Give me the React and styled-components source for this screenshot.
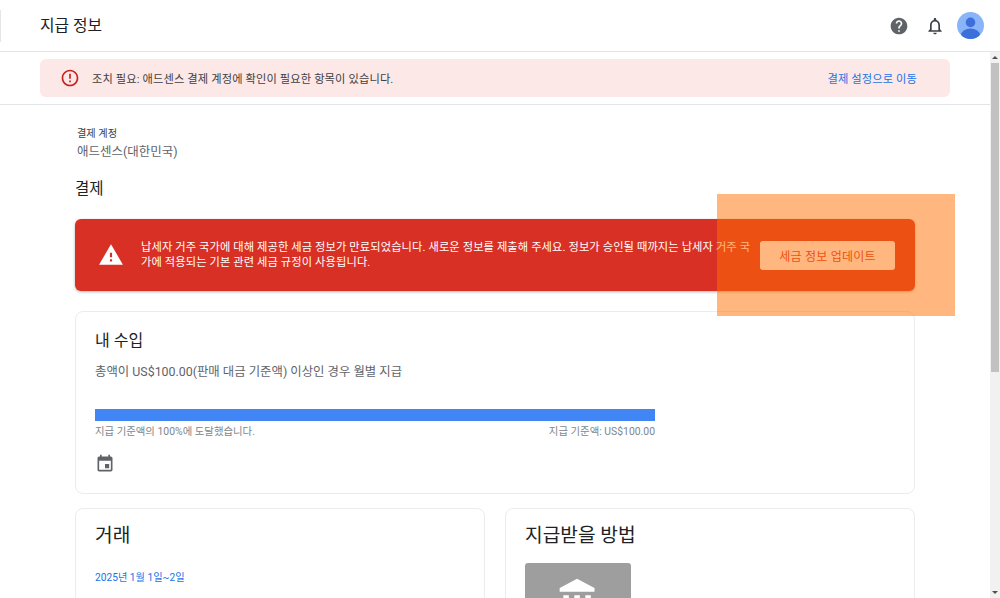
import styled, { createGlobalStyle } from "styled-components";

const GlobalStyle = createGlobalStyle`
  html, body {
    margin: 0;
    padding: 0;
    height: 100%;
    overflow: hidden;
    background: #fff;
    font-family: Roboto, "Noto Sans CJK KR", sans-serif;
  }
  * { box-sizing: border-box; }
`;

const Page = styled.div`
  position: relative;
  width: 1000px;
  height: 598px;
  overflow: hidden;
  display: flex;
  flex-direction: column;
`;

const Header = styled.header`
  flex: none;
  height: 52px;
  display: flex;
  align-items: center;
  padding: 0 16px 0 40px;
  border-bottom: 1px solid #e3e4e7;
`;

const EdgeLine = styled.span`
  position: absolute;
  left: 0;
  top: 10px;
  width: 1px;
  height: 32px;
  background: #e6e6e6;
`;

const PageTitle = styled.h1`
  margin: 0;
  font-size: 15.8px;
  font-weight: 400;
  line-height: 1;
  color: #202124;
  flex: 1;
`;

const HeaderIcons = styled.div`
  display: flex;
  align-items: center;
  gap: 12px;
`;

const HelpSlot = styled.span`
  display: flex;
  margin-right: 4px;
`;

const Body = styled.div`
  flex: 1;
  min-height: 0;
  display: flex;
`;

const Main = styled.main`
  flex: 1;
  min-width: 0;
  overflow: hidden;
`;

const NoticeBand = styled.div`
  height: 53px;
  padding: 7px 40px 0;
  border-bottom: 1px solid #e3e4e7;
`;

const Notice = styled.div`
  height: 38px;
  display: flex;
  align-items: center;
  padding: 0 33px 0 20px;
  background: #fce8e6;
  border-radius: 6px;
  font-size: 11.25px;
  color: #3c4043;
`;

const NoticeText = styled.span`
  flex: 1;
  margin-left: 12px;
  letter-spacing: 0.12px;
`;

const NoticeLink = styled.a`
  color: #1a73e8;
  letter-spacing: 0.12px;
`;

const Content = styled.div`
  padding: 22px 75px 0;
`;

const AccountLabel = styled.div`
  margin-left: 2px;
  font-size: 10.2px;
  line-height: 14px;
  color: #3c4043;
`;

const AccountName = styled.div`
  margin-left: 2px;
  margin-top: 2px;
  font-size: 12.5px;
  line-height: 18px;
  color: #5f6368;
`;

const SectionTitle = styled.h2`
  margin: 17px 0 0;
  font-size: 15.5px;
  line-height: 22px;
  font-weight: 400;
  color: #202124;
`;

const TaxAlert = styled.div`
  margin-top: 19px;
  height: 72px;
  display: flex;
  align-items: center;
  padding: 0 20px 0 23px;
  background: #d93025;
  border-radius: 6px;
  box-shadow: 0 1px 3px rgba(60, 64, 67, 0.4);
  color: #fff;
`;

const AlertText = styled.p`
  flex: 1;
  margin: 0 0 0 17px;
  font-size: 11.25px;
  line-height: 15px;
  letter-spacing: 0.1px;
`;

const AlertButton = styled.button`
  flex: none;
  width: 135px;
  height: 29px;
  margin-left: 8px;
  border: 0;
  border-radius: 3px;
  background: #fff;
  color: #d93025;
  font: inherit;
  font-size: 12px;
  letter-spacing: 0.2px;
`;

const Card = styled.section`
  background: #fff;
  border: 1px solid #ececec;
  border-radius: 8px;
  padding: 18px 19px;
`;

const EarningsCard = styled(Card)`
  margin-top: 20px;
  height: 183px;
`;

const CardTitle = styled.h3`
  margin: 0;
  font-size: ${({ $large }) => ($large ? "19.2px" : "16px")};
  line-height: 22px;
  font-weight: 400;
  color: #202124;
`;

const Threshold = styled.p`
  margin: 11px 0 0;
  font-size: 12.4px;
  line-height: 18px;
  color: #5f6368;
`;

const ProgressTrack = styled.div`
  width: 560px;
  height: 12px;
  margin-top: 28px;
  background: #e8eaed;
`;

const ProgressFill = styled.div`
  height: 100%;
  background: #4285f4;
`;

const ProgressLabels = styled.div`
  width: 560px;
  display: flex;
  justify-content: space-between;
  margin-top: 4px;
  font-size: 10.4px;
  line-height: 14px;
  color: #80868b;
`;

const CalendarSlot = styled.div`
  margin-top: 15px;
  line-height: 0;
`;

const CardRow = styled.div`
  display: grid;
  grid-template-columns: 410px 410px;
  gap: 20px;
  margin-top: 14px;
`;

const LowerCard = styled(Card)`
  height: 200px;
  padding-top: 16px;
`;

const DateRange = styled.div`
  margin-top: 24px;
  font-size: 10.2px;
  line-height: 14px;
  color: #1a73e8;
`;

const BankTile = styled.div`
  width: 106px;
  height: 70px;
  margin-top: 16px;
  display: flex;
  justify-content: center;
  padding-top: 14px;
  background: #9e9e9e;
  border-radius: 3px;
`;

const Scrollbar = styled.div`
  flex: none;
  width: 10px;
  display: flex;
  flex-direction: column;
  align-items: center;
  background: #f1f1f1;
`;

const ScrollArrow = styled.span`
  flex: none;
  width: 0;
  height: 0;
  margin: ${({ $down }) => ($down ? "auto 0 4px" : "4px 0 0")};
  border-left: 3px solid transparent;
  border-right: 3px solid transparent;
  border-${({ $down }) => ($down ? "top" : "bottom")}: 3px solid #505050;
`;

const ScrollThumb = styled.div`
  flex: none;
  width: 8px;
  height: 309px;
  margin-top: 4px;
  background: #c1c1c1;
`;

const SpotOverlay = styled.div`
  position: absolute;
  left: 717px;
  top: 194px;
  width: 238px;
  height: 122px;
  background: rgba(255, 111, 0, 0.5);
`;

const HelpIcon = () => (
  <svg width="20" height="20" viewBox="0 0 24 24" fill="#5f6368">
    <path d="M12 2C6.48 2 2 6.48 2 12s4.48 10 10 10 10-4.48 10-10S17.52 2 12 2zm1 17h-2v-2h2v2zm2.07-7.75l-.9.92C13.45 12.9 13 13.5 13 15h-2v-.5c0-1.1.45-2.1 1.17-2.83l1.24-1.26c.37-.36.59-.86.59-1.41 0-1.1-.9-2-2-2s-2 .9-2 2H8c0-2.21 1.79-4 4-4s4 1.79 4 4c0 .88-.36 1.68-.93 2.25z" />
  </svg>
);

const BellIcon = () => (
  <svg width="20" height="20" viewBox="0 0 24 24" fill="#3c4043">
    <path d="M12 22c1.1 0 2-.9 2-2h-4c0 1.1.9 2 2 2zm6-6v-5c0-3.07-1.63-5.64-4.5-6.32V4c0-.83-.67-1.5-1.5-1.5s-1.5.67-1.5 1.5v.68C7.64 5.36 6 7.92 6 11v5l-2 2v1h16v-1l-2-2zm-2 1H8v-6c0-2.48 1.51-4.5 4-4.5s4 2.02 4 4.5v6z" />
  </svg>
);

const Avatar = () => (
  <svg width="27" height="27" viewBox="0 0 26 26">
    <defs>
      <clipPath id="avatar-clip">
        <circle cx="13" cy="13" r="13" />
      </clipPath>
    </defs>
    <g clipPath="url(#avatar-clip)">
      <rect width="26" height="26" fill="#8ab4f8" />
      <circle cx="13" cy="10" r="4.6" fill="#3c6fd9" />
      <ellipse cx="13" cy="22" rx="9" ry="6" fill="#3c6fd9" />
    </g>
  </svg>
);

const ErrorIcon = () => (
  <svg width="20" height="20" viewBox="0 0 24 24" fill="#c5221f">
    <path d="M11 15h2v2h-2zm0-8h2v6h-2zm.99-5C6.47 2 2 6.48 2 12s4.47 10 9.99 10C17.52 22 22 17.52 22 12S17.52 2 11.99 2zM12 20c-4.42 0-8-3.58-8-8s3.58-8 8-8 8 3.58 8 8-3.58 8-8 8z" />
  </svg>
);

const WarningIcon = () => (
  <svg width="26" height="26" viewBox="0 0 24 24" fill="#fff">
    <path d="M1 21h22L12 2 1 21zm12-3h-2v-2h2v2zm0-4h-2v-4h2v4z" />
  </svg>
);

const CalendarIcon = () => (
  <svg width="20" height="20" viewBox="0 0 24 24" fill="#5f6368">
    <path d="M17 12h-5v5h5v-5zM16 1v2H8V1H6v2H5c-1.11 0-1.99.9-1.99 2L3 19c0 1.1.89 2 2 2h14c1.1 0 2-.9 2-2V5c0-1.1-.9-2-2-2h-1V1h-2zm3 18H5V8h14v11z" />
  </svg>
);

const BankIcon = () => (
  <svg width="44" height="44" viewBox="0 0 24 24" fill="#fff">
    <path d="M4 10v7h3v-7H4zm6 0v7h3v-7h-3zM2 22h19v-3H2v3zm14-12v7h3v-7h-3zM11.5 1L2 6v2h19V6l-9.5-5z" />
  </svg>
);

export default function App() {
  return (
    <>
      <GlobalStyle />
      <Page>
        <EdgeLine />
        <Header>
          <PageTitle>지급 정보</PageTitle>
          <HeaderIcons>
            <HelpSlot>
              <HelpIcon />
            </HelpSlot>
            <BellIcon />
            <Avatar />
          </HeaderIcons>
        </Header>
        <Body>
          <Main>
            <NoticeBand>
              <Notice>
                <ErrorIcon />
                <NoticeText>조치 필요: 애드센스 결제 계정에 확인이 필요한 항목이 있습니다.</NoticeText>
                <NoticeLink>결제 설정으로 이동</NoticeLink>
              </Notice>
            </NoticeBand>
            <Content>
              <AccountLabel>결제 계정</AccountLabel>
              <AccountName>애드센스(대한민국)</AccountName>
              <SectionTitle>결제</SectionTitle>
              <TaxAlert>
                <WarningIcon />
                <AlertText>
                  납세자 거주 국가에 대해 제공한 세금 정보가 만료되었습니다. 새로운 정보를 제출해 주세요. 정보가 승인될 때까지는 납세자 거주 국가에 적용되는 기본 관련 세금 규정이 사용됩니다.
                </AlertText>
                <AlertButton>세금 정보 업데이트</AlertButton>
              </TaxAlert>
              <EarningsCard>
                <CardTitle>내 수입</CardTitle>
                <Threshold>총액이 US$100.00(판매 대금 기준액) 이상인 경우 월별 지급</Threshold>
                <ProgressTrack>
                  <ProgressFill style={{ width: "100%" }} />
                </ProgressTrack>
                <ProgressLabels>
                  <span>지급 기준액의 100%에 도달했습니다.</span>
                  <span>지급 기준액: US$100.00</span>
                </ProgressLabels>
                <CalendarSlot>
                  <CalendarIcon />
                </CalendarSlot>
              </EarningsCard>
              <CardRow>
                <LowerCard>
                  <CardTitle $large>거래</CardTitle>
                  <DateRange>2025년 1월 1일~2일</DateRange>
                </LowerCard>
                <LowerCard>
                  <CardTitle $large>지급받을 방법</CardTitle>
                  <BankTile>
                    <BankIcon />
                  </BankTile>
                </LowerCard>
              </CardRow>
            </Content>
          </Main>
          <Scrollbar>
            <ScrollArrow />
            <ScrollThumb />
            <ScrollArrow $down />
          </Scrollbar>
        </Body>
        <SpotOverlay />
      </Page>
    </>
  );
}
